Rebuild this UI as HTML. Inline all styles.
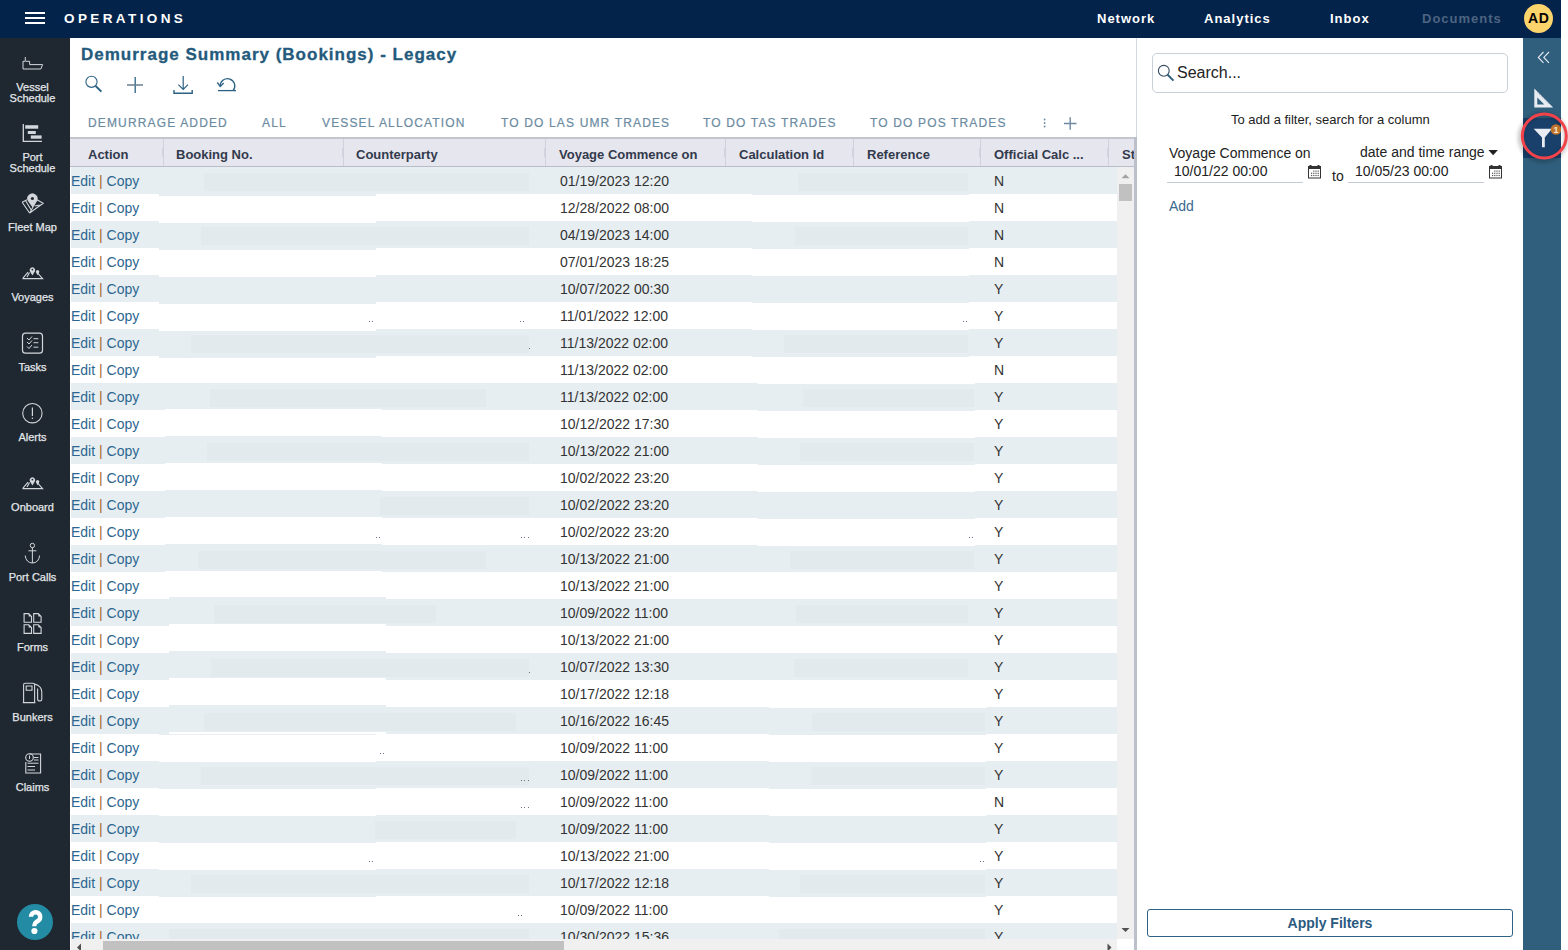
<!DOCTYPE html>
<html><head><meta charset="utf-8"><style>
*{box-sizing:border-box;margin:0;padding:0}
html,body{width:1568px;height:950px;overflow:hidden;background:#fff;font-family:"Liberation Sans",sans-serif;position:relative}
.abs{position:absolute}
.lnk{position:absolute;top:11px;font-size:13px;font-weight:bold;letter-spacing:1px;color:#fff;line-height:15px;white-space:nowrap}
.item{position:absolute;left:0;width:65px;text-align:center;color:#e3e6ea;font-size:11px;line-height:11px;white-space:nowrap;-webkit-text-stroke:0.25px #e3e6ea}
.txt{position:absolute;white-space:nowrap}
.tab{position:absolute;top:116px;font-size:12px;letter-spacing:1.15px;color:#6b8ba2;-webkit-text-stroke:0.2px #6b8ba2;line-height:14px;white-space:nowrap}
.hd{position:absolute;top:147px;font-size:13px;font-weight:bold;color:#323a4c;line-height:16px;white-space:nowrap}
.sep{position:absolute;top:139px;width:1px;height:27px;background:#cfd2dc}
.row{position:absolute;height:27px}
.alt{background:#e7eef1}
.c{position:absolute;font-size:14px;color:#333;white-space:nowrap;line-height:16px}
.ed{color:#2c6690}
.pp{color:#a86a2a}
</style></head><body>
<div class="abs" style="left:0;top:0;width:1561px;height:38px;background:#03234b">
<div class="abs" style="left:25px;top:12px;width:20px;height:2px;background:#fff"></div>
<div class="abs" style="left:25px;top:17px;width:20px;height:2px;background:#fff"></div>
<div class="abs" style="left:25px;top:22px;width:20px;height:2px;background:#fff"></div>
<div class="lnk" style="left:64px;top:10.5px;font-size:13.5px;letter-spacing:3.4px">OPERATIONS</div>
<div class="lnk" style="left:1097px">Network</div>
<div class="lnk" style="left:1204px">Analytics</div>
<div class="lnk" style="left:1330px">Inbox</div>
<div class="lnk" style="left:1422px;color:#4d6480">Documents</div>
<div class="abs" style="left:1524px;top:4px;width:29px;height:29px;border-radius:50%;background:#fcd46c;color:#000;font-size:14px;font-weight:bold;line-height:29px;text-align:center;letter-spacing:0.6px;text-indent:0.6px">AD</div>
</div>
<div class="abs" style="left:0;top:38px;width:70px;height:912px;background:#1f2830"></div>
<div class="item" style="top:82px">Vessel<br>Schedule</div>
<div class="item" style="top:152px">Port<br>Schedule</div>
<div class="item" style="top:222px">Fleet Map</div>
<div class="item" style="top:292px">Voyages</div>
<div class="item" style="top:362px">Tasks</div>
<div class="item" style="top:432px">Alerts</div>
<div class="item" style="top:502px">Onboard</div>
<div class="item" style="top:572px">Port Calls</div>
<div class="item" style="top:642px">Forms</div>
<div class="item" style="top:712px">Bunkers</div>
<div class="item" style="top:782px">Claims</div>
<div class="abs" style="left:17px;top:904px;width:36px;height:36px;border-radius:50%;background:#238ba3"></div>
<div class="abs" style="left:1523px;top:38px;width:38px;height:912px;background:#2f5f7d"></div>
<div class="abs" style="left:1523px;top:118px;width:38px;height:40px;background:#18406a"></div>
<div class="txt" style="left:81px;top:46px;font-size:17px;font-weight:bold;letter-spacing:1px;color:#245a7c;line-height:18px;-webkit-text-stroke:0.3px #245a7c">Demurrage Summary (Bookings) - Legacy</div>
<div class="tab" style="left:88px">DEMURRAGE ADDED</div>
<div class="tab" style="left:262px">ALL</div>
<div class="tab" style="left:322px">VESSEL ALLOCATION</div>
<div class="tab" style="left:501px">TO DO LAS UMR TRADES</div>
<div class="tab" style="left:703px">TO DO TAS TRADES</div>
<div class="tab" style="left:870px">TO DO POS TRADES</div>
<div class="abs" style="left:70px;top:137px;width:1066px;height:2px;background:#c3c6ce"></div>
<div class="abs" style="left:70px;top:139px;width:1064px;height:27px;background:#e6e6ef"></div>
<div class="abs" style="left:70px;top:166px;width:1064px;height:1px;background:#b9bdc7"></div>
<div class="sep" style="left:163px"></div><div class="abs" style="left:162px;top:148px;width:1px;height:9px;background:#d2d5df"></div>
<div class="sep" style="left:343px"></div><div class="abs" style="left:342px;top:148px;width:1px;height:9px;background:#d2d5df"></div>
<div class="sep" style="left:545px"></div><div class="abs" style="left:544px;top:148px;width:1px;height:9px;background:#d2d5df"></div>
<div class="sep" style="left:725px"></div><div class="abs" style="left:724px;top:148px;width:1px;height:9px;background:#d2d5df"></div>
<div class="sep" style="left:853px"></div><div class="abs" style="left:852px;top:148px;width:1px;height:9px;background:#d2d5df"></div>
<div class="sep" style="left:980px"></div><div class="abs" style="left:979px;top:148px;width:1px;height:9px;background:#d2d5df"></div>
<div class="sep" style="left:1108px"></div><div class="abs" style="left:1107px;top:148px;width:1px;height:9px;background:#d2d5df"></div>
<div class="hd" style="left:88px">Action</div>
<div class="hd" style="left:176px">Booking No.</div>
<div class="hd" style="left:356px">Counterparty</div>
<div class="hd" style="left:559px">Voyage Commence on</div>
<div class="hd" style="left:739px">Calculation Id</div>
<div class="hd" style="left:867px">Reference</div>
<div class="hd" style="left:994px">Official Calc ...</div>
<div class="hd" style="left:1122px">St</div>
<div class="abs" style="left:1134px;top:137px;width:3px;height:813px;background:#bcc0ca"></div>
<div class="abs" style="left:1136px;top:38px;width:1px;height:99px;background:#d3d7de"></div>
<div class="abs" style="left:70px;top:167px;width:1047px;height:772px;overflow:hidden">
<div class="row alt" style="left:1px;top:0px;width:1046px"></div>
<div class="c" style="left:1px;top:6px"><span class="ed">Edit</span> <span class="pp">|</span> <span class="ed">Copy</span></div>
<div class="c" style="left:490px;top:6px">01/19/2023 12:20</div>
<div class="c" style="left:924px;top:6px">N</div>
<div class="row" style="left:1px;top:27px;width:1046px"></div>
<div class="c" style="left:1px;top:33px"><span class="ed">Edit</span> <span class="pp">|</span> <span class="ed">Copy</span></div>
<div class="c" style="left:490px;top:33px">12/28/2022 08:00</div>
<div class="c" style="left:924px;top:33px">N</div>
<div class="row alt" style="left:1px;top:54px;width:1046px"></div>
<div class="c" style="left:1px;top:60px"><span class="ed">Edit</span> <span class="pp">|</span> <span class="ed">Copy</span></div>
<div class="c" style="left:490px;top:60px">04/19/2023 14:00</div>
<div class="c" style="left:924px;top:60px">N</div>
<div class="row" style="left:1px;top:81px;width:1046px"></div>
<div class="c" style="left:1px;top:87px"><span class="ed">Edit</span> <span class="pp">|</span> <span class="ed">Copy</span></div>
<div class="c" style="left:490px;top:87px">07/01/2023 18:25</div>
<div class="c" style="left:924px;top:87px">N</div>
<div class="row alt" style="left:1px;top:108px;width:1046px"></div>
<div class="c" style="left:1px;top:114px"><span class="ed">Edit</span> <span class="pp">|</span> <span class="ed">Copy</span></div>
<div class="c" style="left:490px;top:114px">10/07/2022 00:30</div>
<div class="c" style="left:924px;top:114px">Y</div>
<div class="row" style="left:1px;top:135px;width:1046px"></div>
<div class="c" style="left:1px;top:141px"><span class="ed">Edit</span> <span class="pp">|</span> <span class="ed">Copy</span></div>
<div class="c" style="left:490px;top:141px">11/01/2022 12:00</div>
<div class="c" style="left:924px;top:141px">Y</div>
<div class="row alt" style="left:1px;top:162px;width:1046px"></div>
<div class="c" style="left:1px;top:168px"><span class="ed">Edit</span> <span class="pp">|</span> <span class="ed">Copy</span></div>
<div class="c" style="left:490px;top:168px">11/13/2022 02:00</div>
<div class="c" style="left:924px;top:168px">Y</div>
<div class="row" style="left:1px;top:189px;width:1046px"></div>
<div class="c" style="left:1px;top:195px"><span class="ed">Edit</span> <span class="pp">|</span> <span class="ed">Copy</span></div>
<div class="c" style="left:490px;top:195px">11/13/2022 02:00</div>
<div class="c" style="left:924px;top:195px">N</div>
<div class="row alt" style="left:1px;top:216px;width:1046px"></div>
<div class="c" style="left:1px;top:222px"><span class="ed">Edit</span> <span class="pp">|</span> <span class="ed">Copy</span></div>
<div class="c" style="left:490px;top:222px">11/13/2022 02:00</div>
<div class="c" style="left:924px;top:222px">Y</div>
<div class="row" style="left:1px;top:243px;width:1046px"></div>
<div class="c" style="left:1px;top:249px"><span class="ed">Edit</span> <span class="pp">|</span> <span class="ed">Copy</span></div>
<div class="c" style="left:490px;top:249px">10/12/2022 17:30</div>
<div class="c" style="left:924px;top:249px">Y</div>
<div class="row alt" style="left:1px;top:270px;width:1046px"></div>
<div class="c" style="left:1px;top:276px"><span class="ed">Edit</span> <span class="pp">|</span> <span class="ed">Copy</span></div>
<div class="c" style="left:490px;top:276px">10/13/2022 21:00</div>
<div class="c" style="left:924px;top:276px">Y</div>
<div class="row" style="left:1px;top:297px;width:1046px"></div>
<div class="c" style="left:1px;top:303px"><span class="ed">Edit</span> <span class="pp">|</span> <span class="ed">Copy</span></div>
<div class="c" style="left:490px;top:303px">10/02/2022 23:20</div>
<div class="c" style="left:924px;top:303px">Y</div>
<div class="row alt" style="left:1px;top:324px;width:1046px"></div>
<div class="c" style="left:1px;top:330px"><span class="ed">Edit</span> <span class="pp">|</span> <span class="ed">Copy</span></div>
<div class="c" style="left:490px;top:330px">10/02/2022 23:20</div>
<div class="c" style="left:924px;top:330px">Y</div>
<div class="row" style="left:1px;top:351px;width:1046px"></div>
<div class="c" style="left:1px;top:357px"><span class="ed">Edit</span> <span class="pp">|</span> <span class="ed">Copy</span></div>
<div class="c" style="left:490px;top:357px">10/02/2022 23:20</div>
<div class="c" style="left:924px;top:357px">Y</div>
<div class="row alt" style="left:1px;top:378px;width:1046px"></div>
<div class="c" style="left:1px;top:384px"><span class="ed">Edit</span> <span class="pp">|</span> <span class="ed">Copy</span></div>
<div class="c" style="left:490px;top:384px">10/13/2022 21:00</div>
<div class="c" style="left:924px;top:384px">Y</div>
<div class="row" style="left:1px;top:405px;width:1046px"></div>
<div class="c" style="left:1px;top:411px"><span class="ed">Edit</span> <span class="pp">|</span> <span class="ed">Copy</span></div>
<div class="c" style="left:490px;top:411px">10/13/2022 21:00</div>
<div class="c" style="left:924px;top:411px">Y</div>
<div class="row alt" style="left:1px;top:432px;width:1046px"></div>
<div class="c" style="left:1px;top:438px"><span class="ed">Edit</span> <span class="pp">|</span> <span class="ed">Copy</span></div>
<div class="c" style="left:490px;top:438px">10/09/2022 11:00</div>
<div class="c" style="left:924px;top:438px">Y</div>
<div class="row" style="left:1px;top:459px;width:1046px"></div>
<div class="c" style="left:1px;top:465px"><span class="ed">Edit</span> <span class="pp">|</span> <span class="ed">Copy</span></div>
<div class="c" style="left:490px;top:465px">10/13/2022 21:00</div>
<div class="c" style="left:924px;top:465px">Y</div>
<div class="row alt" style="left:1px;top:486px;width:1046px"></div>
<div class="c" style="left:1px;top:492px"><span class="ed">Edit</span> <span class="pp">|</span> <span class="ed">Copy</span></div>
<div class="c" style="left:490px;top:492px">10/07/2022 13:30</div>
<div class="c" style="left:924px;top:492px">Y</div>
<div class="row" style="left:1px;top:513px;width:1046px"></div>
<div class="c" style="left:1px;top:519px"><span class="ed">Edit</span> <span class="pp">|</span> <span class="ed">Copy</span></div>
<div class="c" style="left:490px;top:519px">10/17/2022 12:18</div>
<div class="c" style="left:924px;top:519px">Y</div>
<div class="row alt" style="left:1px;top:540px;width:1046px"></div>
<div class="c" style="left:1px;top:546px"><span class="ed">Edit</span> <span class="pp">|</span> <span class="ed">Copy</span></div>
<div class="c" style="left:490px;top:546px">10/16/2022 16:45</div>
<div class="c" style="left:924px;top:546px">Y</div>
<div class="row" style="left:1px;top:567px;width:1046px"></div>
<div class="c" style="left:1px;top:573px"><span class="ed">Edit</span> <span class="pp">|</span> <span class="ed">Copy</span></div>
<div class="c" style="left:490px;top:573px">10/09/2022 11:00</div>
<div class="c" style="left:924px;top:573px">Y</div>
<div class="row alt" style="left:1px;top:594px;width:1046px"></div>
<div class="c" style="left:1px;top:600px"><span class="ed">Edit</span> <span class="pp">|</span> <span class="ed">Copy</span></div>
<div class="c" style="left:490px;top:600px">10/09/2022 11:00</div>
<div class="c" style="left:924px;top:600px">Y</div>
<div class="row" style="left:1px;top:621px;width:1046px"></div>
<div class="c" style="left:1px;top:627px"><span class="ed">Edit</span> <span class="pp">|</span> <span class="ed">Copy</span></div>
<div class="c" style="left:490px;top:627px">10/09/2022 11:00</div>
<div class="c" style="left:924px;top:627px">N</div>
<div class="row alt" style="left:1px;top:648px;width:1046px"></div>
<div class="c" style="left:1px;top:654px"><span class="ed">Edit</span> <span class="pp">|</span> <span class="ed">Copy</span></div>
<div class="c" style="left:490px;top:654px">10/09/2022 11:00</div>
<div class="c" style="left:924px;top:654px">Y</div>
<div class="row" style="left:1px;top:675px;width:1046px"></div>
<div class="c" style="left:1px;top:681px"><span class="ed">Edit</span> <span class="pp">|</span> <span class="ed">Copy</span></div>
<div class="c" style="left:490px;top:681px">10/13/2022 21:00</div>
<div class="c" style="left:924px;top:681px">Y</div>
<div class="row alt" style="left:1px;top:702px;width:1046px"></div>
<div class="c" style="left:1px;top:708px"><span class="ed">Edit</span> <span class="pp">|</span> <span class="ed">Copy</span></div>
<div class="c" style="left:490px;top:708px">10/17/2022 12:18</div>
<div class="c" style="left:924px;top:708px">Y</div>
<div class="row" style="left:1px;top:729px;width:1046px"></div>
<div class="c" style="left:1px;top:735px"><span class="ed">Edit</span> <span class="pp">|</span> <span class="ed">Copy</span></div>
<div class="c" style="left:490px;top:735px">10/09/2022 11:00</div>
<div class="c" style="left:924px;top:735px">Y</div>
<div class="row alt" style="left:1px;top:756px;width:1046px"></div>
<div class="c" style="left:1px;top:762px"><span class="ed">Edit</span> <span class="pp">|</span> <span class="ed">Copy</span></div>
<div class="c" style="left:490px;top:762px">10/30/2022 15:36</div>
<div class="c" style="left:924px;top:762px">Y</div>
<div class="abs" style="left:89px;top:0px;width:217px;height:216px;overflow:hidden">
<div class="abs" style="left:0;top:-25px;width:217px;height:27px;background:#e7eef1"></div>
<div class="abs" style="left:0;top:2px;width:217px;height:27px;background:#e7eef1"></div>
<div class="abs" style="left:0;top:29px;width:217px;height:27px;background:#fff"></div>
<div class="abs" style="left:0;top:56px;width:217px;height:27px;background:#e7eef1"></div>
<div class="abs" style="left:0;top:83px;width:217px;height:27px;background:#fff"></div>
<div class="abs" style="left:0;top:110px;width:217px;height:27px;background:#e7eef1"></div>
<div class="abs" style="left:0;top:137px;width:217px;height:27px;background:#fff"></div>
<div class="abs" style="left:0;top:164px;width:217px;height:27px;background:#e7eef1"></div>
<div class="abs" style="left:0;top:191px;width:217px;height:27px;background:#fff"></div>
<div class="abs" style="left:0;top:218px;width:217px;height:27px;background:#e7eef1"></div>
</div>
<div class="abs" style="left:95px;top:216px;width:217px;height:189px;overflow:hidden">
<div class="abs" style="left:0;top:-28px;width:217px;height:27px;background:#fff"></div>
<div class="abs" style="left:0;top:-1px;width:217px;height:27px;background:#e7eef1"></div>
<div class="abs" style="left:0;top:26px;width:217px;height:27px;background:#fff"></div>
<div class="abs" style="left:0;top:53px;width:217px;height:27px;background:#e7eef1"></div>
<div class="abs" style="left:0;top:80px;width:217px;height:27px;background:#fff"></div>
<div class="abs" style="left:0;top:107px;width:217px;height:27px;background:#e7eef1"></div>
<div class="abs" style="left:0;top:134px;width:217px;height:27px;background:#fff"></div>
<div class="abs" style="left:0;top:161px;width:217px;height:27px;background:#e7eef1"></div>
<div class="abs" style="left:0;top:188px;width:217px;height:27px;background:#fff"></div>
</div>
<div class="abs" style="left:99px;top:405px;width:217px;height:162px;overflow:hidden">
<div class="abs" style="left:0;top:-29px;width:217px;height:27px;background:#e7eef1"></div>
<div class="abs" style="left:0;top:-2px;width:217px;height:27px;background:#fff"></div>
<div class="abs" style="left:0;top:25px;width:217px;height:27px;background:#e7eef1"></div>
<div class="abs" style="left:0;top:52px;width:217px;height:27px;background:#fff"></div>
<div class="abs" style="left:0;top:79px;width:217px;height:27px;background:#e7eef1"></div>
<div class="abs" style="left:0;top:106px;width:217px;height:27px;background:#fff"></div>
<div class="abs" style="left:0;top:133px;width:217px;height:27px;background:#e7eef1"></div>
<div class="abs" style="left:0;top:160px;width:217px;height:27px;background:#fff"></div>
</div>
<div class="abs" style="left:89px;top:567px;width:217px;height:189px;overflow:hidden">
<div class="abs" style="left:0;top:-26px;width:217px;height:27px;background:#e7eef1"></div>
<div class="abs" style="left:0;top:1px;width:217px;height:27px;background:#fff"></div>
<div class="abs" style="left:0;top:28px;width:217px;height:27px;background:#e7eef1"></div>
<div class="abs" style="left:0;top:55px;width:217px;height:27px;background:#fff"></div>
<div class="abs" style="left:0;top:82px;width:217px;height:27px;background:#e7eef1"></div>
<div class="abs" style="left:0;top:109px;width:217px;height:27px;background:#fff"></div>
<div class="abs" style="left:0;top:136px;width:217px;height:27px;background:#e7eef1"></div>
<div class="abs" style="left:0;top:163px;width:217px;height:27px;background:#fff"></div>
<div class="abs" style="left:0;top:190px;width:217px;height:27px;background:#e7eef1"></div>
</div>
<div class="abs" style="left:682px;top:0px;width:217px;height:216px;overflow:hidden">
<div class="abs" style="left:0;top:-26px;width:217px;height:27px;background:#e7eef1"></div>
<div class="abs" style="left:0;top:1px;width:217px;height:27px;background:#e7eef1"></div>
<div class="abs" style="left:0;top:28px;width:217px;height:27px;background:#fff"></div>
<div class="abs" style="left:0;top:55px;width:217px;height:27px;background:#e7eef1"></div>
<div class="abs" style="left:0;top:82px;width:217px;height:27px;background:#fff"></div>
<div class="abs" style="left:0;top:109px;width:217px;height:27px;background:#e7eef1"></div>
<div class="abs" style="left:0;top:136px;width:217px;height:27px;background:#fff"></div>
<div class="abs" style="left:0;top:163px;width:217px;height:27px;background:#e7eef1"></div>
<div class="abs" style="left:0;top:190px;width:217px;height:27px;background:#fff"></div>
<div class="abs" style="left:0;top:217px;width:217px;height:27px;background:#e7eef1"></div>
</div>
<div class="abs" style="left:688px;top:216px;width:217px;height:189px;overflow:hidden">
<div class="abs" style="left:0;top:-26px;width:217px;height:27px;background:#fff"></div>
<div class="abs" style="left:0;top:1px;width:217px;height:27px;background:#e7eef1"></div>
<div class="abs" style="left:0;top:28px;width:217px;height:27px;background:#fff"></div>
<div class="abs" style="left:0;top:55px;width:217px;height:27px;background:#e7eef1"></div>
<div class="abs" style="left:0;top:82px;width:217px;height:27px;background:#fff"></div>
<div class="abs" style="left:0;top:109px;width:217px;height:27px;background:#e7eef1"></div>
<div class="abs" style="left:0;top:136px;width:217px;height:27px;background:#fff"></div>
<div class="abs" style="left:0;top:163px;width:217px;height:27px;background:#e7eef1"></div>
<div class="abs" style="left:0;top:190px;width:217px;height:27px;background:#fff"></div>
</div>
<div class="abs" style="left:699px;top:540px;width:217px;height:216px;overflow:hidden">
<div class="abs" style="left:0;top:-26px;width:217px;height:27px;background:#fff"></div>
<div class="abs" style="left:0;top:1px;width:217px;height:27px;background:#e7eef1"></div>
<div class="abs" style="left:0;top:28px;width:217px;height:27px;background:#fff"></div>
<div class="abs" style="left:0;top:55px;width:217px;height:27px;background:#e7eef1"></div>
<div class="abs" style="left:0;top:82px;width:217px;height:27px;background:#fff"></div>
<div class="abs" style="left:0;top:109px;width:217px;height:27px;background:#e7eef1"></div>
<div class="abs" style="left:0;top:136px;width:217px;height:27px;background:#fff"></div>
<div class="abs" style="left:0;top:163px;width:217px;height:27px;background:#e7eef1"></div>
<div class="abs" style="left:0;top:190px;width:217px;height:27px;background:#fff"></div>
<div class="abs" style="left:0;top:217px;width:217px;height:27px;background:#e7eef1"></div>
</div>
<div class="abs" style="left:134px;top:6px;width:325px;height:18px;background:#e3eaed"></div>
<div class="abs" style="left:728px;top:6px;width:170px;height:18px;background:#e3eaed"></div>
<div class="abs" style="left:131px;top:60px;width:328px;height:18px;background:#e3eaed"></div>
<div class="abs" style="left:725px;top:60px;width:173px;height:18px;background:#e3eaed"></div>
<div class="abs" style="left:121px;top:168px;width:338px;height:18px;background:#e3eaed"></div>
<div class="abs" style="left:714px;top:168px;width:184px;height:18px;background:#e3eaed"></div>
<div class="abs" style="left:140px;top:222px;width:276px;height:18px;background:#e3eaed"></div>
<div class="abs" style="left:733px;top:222px;width:171px;height:18px;background:#e3eaed"></div>
<div class="abs" style="left:137px;top:276px;width:322px;height:18px;background:#e3eaed"></div>
<div class="abs" style="left:730px;top:276px;width:174px;height:18px;background:#e3eaed"></div>
<div class="abs" style="left:310px;top:330px;width:149px;height:18px;background:#e3eaed"></div>
<div class="abs" style="left:128px;top:384px;width:288px;height:18px;background:#e3eaed"></div>
<div class="abs" style="left:720px;top:384px;width:184px;height:18px;background:#e3eaed"></div>
<div class="abs" style="left:144px;top:438px;width:222px;height:18px;background:#e3eaed"></div>
<div class="abs" style="left:726px;top:438px;width:172px;height:18px;background:#e3eaed"></div>
<div class="abs" style="left:141px;top:492px;width:318px;height:18px;background:#e3eaed"></div>
<div class="abs" style="left:724px;top:492px;width:174px;height:18px;background:#e3eaed"></div>
<div class="abs" style="left:134px;top:546px;width:312px;height:18px;background:#e3eaed"></div>
<div class="abs" style="left:742px;top:546px;width:173px;height:18px;background:#e3eaed"></div>
<div class="abs" style="left:131px;top:600px;width:328px;height:18px;background:#e3eaed"></div>
<div class="abs" style="left:741px;top:600px;width:174px;height:18px;background:#e3eaed"></div>
<div class="abs" style="left:305px;top:654px;width:141px;height:18px;background:#e3eaed"></div>
<div class="abs" style="left:121px;top:708px;width:338px;height:18px;background:#e3eaed"></div>
<div class="abs" style="left:730px;top:708px;width:185px;height:18px;background:#e3eaed"></div>
<div class="abs" style="left:99px;top:762px;width:360px;height:18px;background:#e3eaed"></div>
<div class="abs" style="left:709px;top:762px;width:206px;height:18px;background:#e3eaed"></div>
<div class="abs" style="left:299.0px;top:154px;width:1.2px;height:1.2px;background:#6a7088"></div>
<div class="abs" style="left:302.3px;top:154px;width:1.2px;height:1.2px;background:#6a7088"></div>
<div class="abs" style="left:450.0px;top:154px;width:1.2px;height:1.2px;background:#6a7088"></div>
<div class="abs" style="left:453.3px;top:154px;width:1.2px;height:1.2px;background:#6a7088"></div>
<div class="abs" style="left:893.0px;top:154px;width:1.2px;height:1.2px;background:#6a7088"></div>
<div class="abs" style="left:896.3px;top:154px;width:1.2px;height:1.2px;background:#6a7088"></div>
<div class="abs" style="left:306.0px;top:370px;width:1.2px;height:1.2px;background:#6a7088"></div>
<div class="abs" style="left:309.3px;top:370px;width:1.2px;height:1.2px;background:#6a7088"></div>
<div class="abs" style="left:451.0px;top:370px;width:1.2px;height:1.2px;background:#6a7088"></div>
<div class="abs" style="left:454.3px;top:370px;width:1.2px;height:1.2px;background:#6a7088"></div>
<div class="abs" style="left:457.6px;top:370px;width:1.2px;height:1.2px;background:#6a7088"></div>
<div class="abs" style="left:899.0px;top:370px;width:1.2px;height:1.2px;background:#6a7088"></div>
<div class="abs" style="left:902.3px;top:370px;width:1.2px;height:1.2px;background:#6a7088"></div>
<div class="abs" style="left:310.0px;top:586px;width:1.2px;height:1.2px;background:#6a7088"></div>
<div class="abs" style="left:313.3px;top:586px;width:1.2px;height:1.2px;background:#6a7088"></div>
<div class="abs" style="left:451.0px;top:613px;width:1.2px;height:1.2px;background:#6a7088"></div>
<div class="abs" style="left:454.3px;top:613px;width:1.2px;height:1.2px;background:#6a7088"></div>
<div class="abs" style="left:457.6px;top:613px;width:1.2px;height:1.2px;background:#6a7088"></div>
<div class="abs" style="left:451.0px;top:640px;width:1.2px;height:1.2px;background:#6a7088"></div>
<div class="abs" style="left:454.3px;top:640px;width:1.2px;height:1.2px;background:#6a7088"></div>
<div class="abs" style="left:457.6px;top:640px;width:1.2px;height:1.2px;background:#6a7088"></div>
<div class="abs" style="left:299.0px;top:694px;width:1.2px;height:1.2px;background:#6a7088"></div>
<div class="abs" style="left:302.3px;top:694px;width:1.2px;height:1.2px;background:#6a7088"></div>
<div class="abs" style="left:910.0px;top:694px;width:1.2px;height:1.2px;background:#6a7088"></div>
<div class="abs" style="left:913.3px;top:694px;width:1.2px;height:1.2px;background:#6a7088"></div>
<div class="abs" style="left:448.0px;top:748px;width:1.2px;height:1.2px;background:#6a7088"></div>
<div class="abs" style="left:451.3px;top:748px;width:1.2px;height:1.2px;background:#6a7088"></div>
<div class="abs" style="left:459.0px;top:505px;width:1.2px;height:1.2px;background:#6a7088"></div>
<div class="abs" style="left:459.0px;top:181px;width:1.2px;height:1.2px;background:#6a7088"></div>
</div>
<div class="abs" style="left:1117px;top:167px;width:17px;height:772px;background:#f0f0f0"></div>
<div class="abs" style="left:1119px;top:184px;width:13px;height:17px;background:#c1c1c1"></div>
<div class="abs" style="left:71px;top:939px;width:1046px;height:11px;background:#f0f0f0"></div>
<div class="abs" style="left:103px;top:941px;width:461px;height:9px;background:#c1c1c1"></div>
<div class="abs" style="left:1152px;top:53px;width:356px;height:40px;border:1px solid #c9d0d9;border-radius:5px"></div>
<div class="txt" style="left:1177px;top:65px;font-size:16px;color:#222;line-height:16px">Search...</div>
<div class="txt" style="left:1231px;top:112px;font-size:13px;color:#222;line-height:15px">To add a filter, search for a column</div>
<div class="txt" style="left:1169px;top:145px;font-size:14px;color:#222;line-height:16px">Voyage Commence on</div>
<div class="txt" style="left:1360px;top:144px;font-size:14px;color:#222;line-height:16px">date and time range</div>
<div class="txt" style="left:1174px;top:163px;font-size:14px;color:#222;line-height:16px">10/01/22 00:00</div>
<div class="txt" style="left:1355px;top:163px;font-size:14px;color:#222;line-height:16px">10/05/23 00:00</div>
<div class="txt" style="left:1332px;top:168px;font-size:14px;color:#222;line-height:16px">to</div>
<div class="abs" style="left:1167px;top:182px;width:136px;height:1px;background:#c3cad3"></div>
<div class="abs" style="left:1348px;top:182px;width:136px;height:1px;background:#c3cad3"></div>
<div class="txt" style="left:1169px;top:198px;font-size:14px;color:#3a6a90;line-height:16px">Add</div>
<div class="abs" style="left:1147px;top:909px;width:366px;height:28px;border:1px solid #2f6283;border-radius:3px;color:#2a5a80;font-size:14px;font-weight:bold;text-align:center;line-height:26px">Apply Filters</div>
<svg class="abs" style="left:0;top:0" width="1568" height="950" viewBox="0 0 1568 950"><circle cx="91.5" cy="81.8" r="5.6" fill="none" stroke="#2c6184" stroke-width="1.1"/><line x1="95.6" y1="86" x2="101.4" y2="91.6" stroke="#2c6184" stroke-width="2"/><line x1="135.2" y1="77" x2="135.2" y2="93" stroke="#2c6184" stroke-width="1.3"/><line x1="127" y1="85" x2="143" y2="85" stroke="#687c91" stroke-width="1.5"/><path d="M183.2 76 V89.2 M178.4 84.6 L183.2 89.4 L188 84.6" fill="none" stroke="#2c6184" stroke-width="1.2"/><path d="M174 90 V93.3 H192.2 V90" fill="none" stroke="#2c6184" stroke-width="1.4"/><path d="M220.2 86 A7.3 7.3 0 1 1 233.2 90.5" fill="none" stroke="#2c6184" stroke-width="1.3"/><path d="M217.3 82.5 L220.2 86.6 L223.7 83" fill="none" stroke="#2c6184" stroke-width="1.3"/><line x1="218" y1="90.6" x2="236" y2="90.6" stroke="#2c6184" stroke-width="1.3"/><circle cx="1044.6" cy="119.5" r="0.9" fill="#6f8aa0"/><circle cx="1044.6" cy="123" r="0.9" fill="#6f8aa0"/><circle cx="1044.6" cy="126.5" r="0.9" fill="#6f8aa0"/><path d="M1064 123.5 H1076.5 M1070.2 117.2 V129.8" stroke="#6f8aa0" stroke-width="1.4"/><path d="M25.3 57 V61.3 H23 V69 H40.8 L42.6 64.6 H29.6 V61.3 H26" fill="none" stroke="#d3d7dc" stroke-width="1"/><path d="M23.3 124 V141.3 H42" fill="none" stroke="#d3d7dc" stroke-width="1.3"/><rect x="25.2" y="125.2" width="13" height="3.5" fill="#d3d7dc"/><rect x="27.8" y="131" width="8" height="3" fill="#d3d7dc"/><rect x="30.8" y="135.4" width="10.8" height="3.3" fill="#d3d7dc"/><path d="M22.2 202.2 L27 199.8 M37 199.8 L43.2 203.2 L29.6 213 Z M22.2 202.2 L29.6 213 M25.5 200.5 L31.5 210.5 M34.8 206 L39.5 205" fill="none" stroke="#d3d7dc" stroke-width="1.1"/><path d="M32.4 207.2 L28.3 201.5 A5.1 5.1 0 1 1 36.5 201.5 Z" fill="#d3d7dc"/><circle cx="32.4" cy="198.5" r="1.6" fill="#1f2830"/><path d="M22.6 278.6 L28 272.2 M36.8 272.2 L42.6 278.6 H22.6" fill="none" stroke="#d3d7dc" stroke-width="1.1"/><path d="M32.4 275.5 L30 271.6 A2.8 2.8 0 1 1 34.8 271.6 Z" fill="#d3d7dc"/><circle cx="32.4" cy="269.6" r="0.9" fill="#1f2830"/><path d="M37.6 275.2 L36.2 272.8 A1.7 1.7 0 1 1 39 272.8 Z" fill="#d3d7dc"/><path d="M27 277 L29.5 272.5" stroke="#d3d7dc" stroke-width="1.2"/><path d="M22.6 488.6 L28 482.2 M36.8 482.2 L42.6 488.6 H22.6" fill="none" stroke="#d3d7dc" stroke-width="1.1"/><path d="M32.4 485.5 L30 481.6 A2.8 2.8 0 1 1 34.8 481.6 Z" fill="#d3d7dc"/><circle cx="32.4" cy="479.6" r="0.9" fill="#1f2830"/><path d="M37.6 485.2 L36.2 482.8 A1.7 1.7 0 1 1 39 482.8 Z" fill="#d3d7dc"/><path d="M27 487 L29.5 482.5" stroke="#d3d7dc" stroke-width="1.2"/><rect x="22.5" y="333.2" width="20" height="20" rx="3" fill="none" stroke="#d3d7dc" stroke-width="1.2"/><path d="M27 338 L29 340 L32 336.5" fill="none" stroke="#d3d7dc" stroke-width="1"/><line x1="33.5" y1="338.7" x2="38.3" y2="338.7" stroke="#d3d7dc" stroke-width="1"/><path d="M27 342 L29 344 L32 340.5" fill="none" stroke="#d3d7dc" stroke-width="1"/><line x1="33.5" y1="342.7" x2="38.3" y2="342.7" stroke="#d3d7dc" stroke-width="1"/><path d="M27 346.5 L29 348.5 L32 345.0" fill="none" stroke="#d3d7dc" stroke-width="1"/><line x1="33.5" y1="347.2" x2="38.3" y2="347.2" stroke="#d3d7dc" stroke-width="1"/><circle cx="32.4" cy="413.2" r="9.7" fill="none" stroke="#d3d7dc" stroke-width="1.1"/><line x1="32.4" y1="407.5" x2="32.4" y2="416" stroke="#d3d7dc" stroke-width="1.2"/><circle cx="32.4" cy="418.2" r="0.8" fill="#d3d7dc"/><circle cx="32.4" cy="545.5" r="2.2" fill="none" stroke="#d3d7dc" stroke-width="1"/><path d="M32.4 547.7 V563 M28.4 550.8 H36.4 M25.2 555.5 Q26 562.8 32.4 563 Q38.8 562.8 39.6 555.5" fill="none" stroke="#d3d7dc" stroke-width="1"/><path d="M24.1 613.6 H28.700000000000003 L31.5 616.4 V622.2 H24.1 Z" fill="none" stroke="#d3d7dc" stroke-width="1.1"/><path d="M28.700000000000003 613.6 V616.4 H31.5 Z" fill="#d3d7dc"/><path d="M24.1 624.8000000000001 H28.700000000000003 L31.5 627.6 V633.4000000000001 H24.1 Z" fill="none" stroke="#d3d7dc" stroke-width="1.1"/><path d="M28.700000000000003 624.8000000000001 V627.6 H31.5 Z" fill="#d3d7dc"/><path d="M33.7 613.6 H38.300000000000004 L41.1 616.4 V622.2 H33.7 Z" fill="none" stroke="#d3d7dc" stroke-width="1.1"/><path d="M38.300000000000004 613.6 V616.4 H41.1 Z" fill="#d3d7dc"/><path d="M33.7 624.8000000000001 H38.300000000000004 L41.1 627.6 V633.4000000000001 H33.7 Z" fill="none" stroke="#d3d7dc" stroke-width="1.1"/><path d="M38.300000000000004 624.8000000000001 V627.6 H41.1 Z" fill="#d3d7dc"/><path d="M23.6 702.5 V684.8 Q23.6 683.2 25.2 683.2 H33 Q34.6 683.2 34.6 684.8 V702.5 M22.8 702.6 H35.4 M26.2 686 H32 V690.2 H26.2 Z M34.6 684 Q41.8 686 41.8 692 V699 Q41.8 701 40 701 Q37.6 701 37.6 699 V688.5" fill="none" stroke="#d3d7dc" stroke-width="1.1"/><path d="M29.5 754 H40.6 V773 H25.8 V762" fill="none" stroke="#d3d7dc" stroke-width="1.1"/><circle cx="29.5" cy="757.5" r="3.8" fill="none" stroke="#d3d7dc" stroke-width="1.1"/><line x1="29.5" y1="755.5" x2="29.5" y2="759" stroke="#d3d7dc" stroke-width="1"/><path d="M34 757.5 H38.5 M34 760 H38.5 M27.5 763.2 H38.5 M27.5 766.5 H35 M27.5 770 H35" stroke="#d3d7dc" stroke-width="1"/><path d="M31 916.8 A4.6 4.6 0 1 1 38.3 920.6 L36.2 922.1 Q34.4 923.3 34.4 925.2 V926.3" fill="none" stroke="#fff" stroke-width="4.4"/><circle cx="34.4" cy="931" r="3.1" fill="#fff"/><path d="M1543.5 52 L1538.3 57.4 L1543.5 62.8 M1549 52 L1543.8 57.4 L1549 62.8" fill="none" stroke="#e9ebf2" stroke-width="1.1"/><path d="M1534.3 88.6 V107.5 H1553.2 Z M1537.3 97.6 V104.6 H1544.3 Z" fill="#e9ebf2" fill-rule="evenodd"/><rect x="1537.2" y="92.4" width="1" height="1" fill="#b9bfd3"/><rect x="1538.95" y="94.15" width="1" height="1" fill="#b9bfd3"/><rect x="1540.7" y="95.9" width="1" height="1" fill="#b9bfd3"/><rect x="1542.45" y="97.65" width="1" height="1" fill="#b9bfd3"/><rect x="1544.2" y="99.4" width="1" height="1" fill="#b9bfd3"/><rect x="1545.95" y="101.15" width="1" height="1" fill="#b9bfd3"/><rect x="1547.7" y="102.9" width="1" height="1" fill="#b9bfd3"/><path d="M1533.7 128.8 H1552 L1544.8 137.6 V147.2 H1542 V137.6 Z" fill="#e9ebf2"/><defs><clipPath id="sbc"><rect x="1523" y="38" width="38" height="912"/></clipPath></defs><circle cx="1556" cy="129.5" r="5.3" fill="#c27529" clip-path="url(#sbc)"/><text x="1556" y="133.4" font-family="Liberation Sans" font-size="9" font-weight="bold" fill="#f3e6d6" text-anchor="middle">1</text><defs><filter id="blr" x="-50%" y="-50%" width="200%" height="200%"><feGaussianBlur stdDeviation="2.2"/></filter></defs><circle cx="1543.3" cy="137.5" r="23" fill="none" stroke="rgba(0,0,0,0.35)" stroke-width="3" filter="url(#blr)"/><circle cx="1544.3" cy="136" r="22" fill="none" stroke="#f2434b" stroke-width="3"/><circle cx="1163.8" cy="70.8" r="5.4" fill="none" stroke="#34495e" stroke-width="1.1"/><line x1="1167.6" y1="74.8" x2="1173.5" y2="80.6" stroke="#2c5b7a" stroke-width="1.9"/><rect x="1308.5" y="166.5" width="12" height="11.5" fill="none" stroke="#333" stroke-width="1"/><rect x="1308" y="166" width="13" height="3" fill="#333"/><rect x="1309.5" y="165" width="2" height="1.5" fill="#333"/><rect x="1317.5" y="165" width="2" height="1.5" fill="#333"/><rect x="1311.0" y="172.7" width="1.2" height="1.2" fill="#555"/><rect x="1311.0" y="174.9" width="1.2" height="1.2" fill="#555"/><rect x="1313.2" y="170.5" width="1.2" height="1.2" fill="#555"/><rect x="1313.2" y="172.7" width="1.2" height="1.2" fill="#555"/><rect x="1313.2" y="174.9" width="1.2" height="1.2" fill="#555"/><rect x="1315.4" y="170.5" width="1.2" height="1.2" fill="#555"/><rect x="1315.4" y="172.7" width="1.2" height="1.2" fill="#555"/><rect x="1315.4" y="174.9" width="1.2" height="1.2" fill="#555"/><rect x="1317.6" y="170.5" width="1.2" height="1.2" fill="#555"/><rect x="1317.6" y="172.7" width="1.2" height="1.2" fill="#555"/><rect x="1317.6" y="174.9" width="1.2" height="1.2" fill="#555"/><rect x="1489.5" y="166.5" width="12" height="11.5" fill="none" stroke="#333" stroke-width="1"/><rect x="1489" y="166" width="13" height="3" fill="#333"/><rect x="1490.5" y="165" width="2" height="1.5" fill="#333"/><rect x="1498.5" y="165" width="2" height="1.5" fill="#333"/><rect x="1492.0" y="172.7" width="1.2" height="1.2" fill="#555"/><rect x="1492.0" y="174.9" width="1.2" height="1.2" fill="#555"/><rect x="1494.2" y="170.5" width="1.2" height="1.2" fill="#555"/><rect x="1494.2" y="172.7" width="1.2" height="1.2" fill="#555"/><rect x="1494.2" y="174.9" width="1.2" height="1.2" fill="#555"/><rect x="1496.4" y="170.5" width="1.2" height="1.2" fill="#555"/><rect x="1496.4" y="172.7" width="1.2" height="1.2" fill="#555"/><rect x="1496.4" y="174.9" width="1.2" height="1.2" fill="#555"/><rect x="1498.6" y="170.5" width="1.2" height="1.2" fill="#555"/><rect x="1498.6" y="172.7" width="1.2" height="1.2" fill="#555"/><rect x="1498.6" y="174.9" width="1.2" height="1.2" fill="#555"/><path d="M1488.4 150 H1497.9 L1493.15 155.2 Z" fill="#222"/><path d="M1121.5 178.3 H1129.5 L1125.5 174.3 Z" fill="#a3a3a3"/><path d="M1121.5 928 H1129.5 L1125.5 932 Z" fill="#505050"/><path d="M81 943.5 V951.5 L77 947.5 Z" fill="#505050"/><path d="M1107.5 943.5 V951.5 L1111.5 947.5 Z" fill="#505050"/></svg>
</body></html>
